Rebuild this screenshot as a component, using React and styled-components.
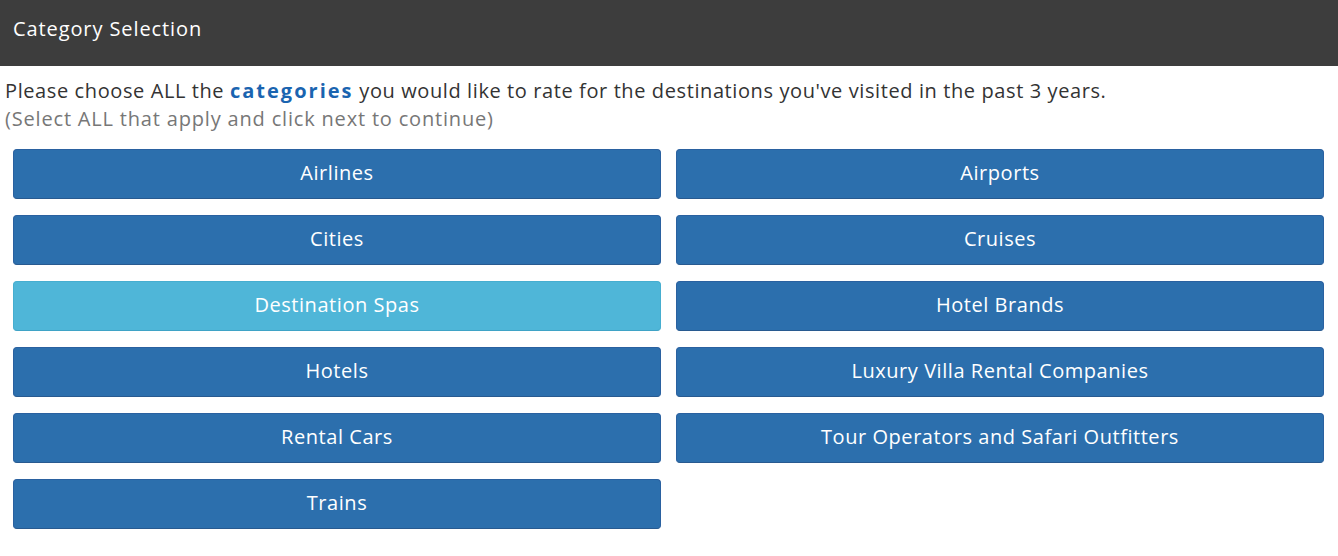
import styled, { createGlobalStyle } from "styled-components";

const GlobalStyle = createGlobalStyle`
  body {
    margin: 0;
    background: #ffffff;
    font-family: "Open Sans", "Liberation Sans", sans-serif;
  }
`;

const Header = styled.div`
  height: 66px;
  background-color: #3d3d3d;
  color: #ffffff;
  display: flex;
  align-items: center;
  padding: 0 13px 10px;
  box-sizing: border-box;
  font-size: 20px;
  letter-spacing: 0.9px;
`;

const Intro = styled.div`
  padding: 11px 5px 0;
`;

const Question = styled.p`
  margin: 0;
  font-size: 20px;
  line-height: 28px;
  color: #333333;
  letter-spacing: 0.6px;
`;

const Highlight = styled.span`
  color: #1a64b0;
  font-weight: 700;
  letter-spacing: 2px;
`;

const Hint = styled.p`
  margin: 0;
  font-size: 20px;
  line-height: 28px;
  color: #777777;
  letter-spacing: 0.82px;
`;

const Grid = styled.div`
  display: grid;
  grid-template-columns: 1fr 1fr;
  column-gap: 15px;
  row-gap: 16px;
  padding: 16px 14px 20px 13px;
`;

const CategoryButton = styled.button`
  height: 50px;
  border-radius: 4px;
  border: 1px solid ${(p) => (p.$selected ? "#46aed0" : "#2a61a0")};
  border-bottom-color: ${(p) => (p.$selected ? "#3fa3c6" : "#285a90")};
  background-color: ${(p) => (p.$selected ? "#4fb6d8" : "#2c6fad")};
  color: #ffffff;
  font-family: "Open Sans", "Liberation Sans", sans-serif;
  font-size: 20px;
  letter-spacing: 0.55px;
  cursor: pointer;
  padding: 0 0 4px;
`;

const categories = [
  "Airlines",
  "Airports",
  "Cities",
  "Cruises",
  "Destination Spas",
  "Hotel Brands",
  "Hotels",
  "Luxury Villa Rental Companies",
  "Rental Cars",
  "Tour Operators and Safari Outfitters",
  "Trains",
];

export default function App() {
  return (
    <>
      <GlobalStyle />
      <Header>Category Selection</Header>
      <Intro>
        <Question>
          Please choose ALL the <Highlight>categories</Highlight> you would like to rate for the
          destinations you've visited in the past 3 years.
        </Question>
        <Hint>(Select ALL that apply and click next to continue)</Hint>
      </Intro>
      <Grid>
        {categories.map((name) => (
          <CategoryButton key={name} $selected={name === "Destination Spas"}>
            {name}
          </CategoryButton>
        ))}
      </Grid>
    </>
  );
}
